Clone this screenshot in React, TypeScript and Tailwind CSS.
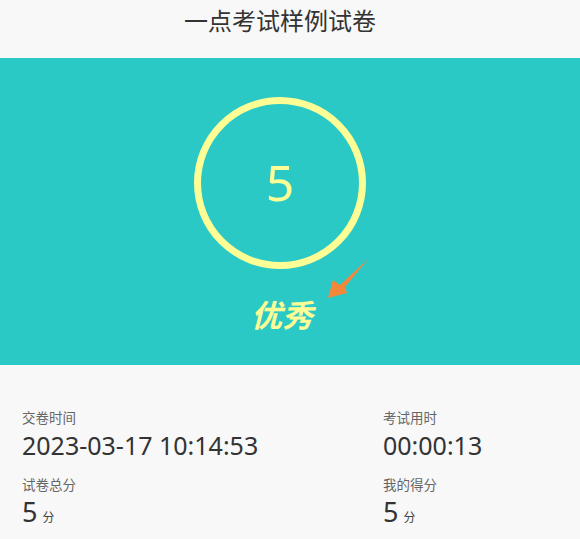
import React from "react";

const font = { fontFamily: '"Noto Sans", "Noto Sans CJK SC", sans-serif' };

function Stat({ label, value, unit, big }: { label: string; value: string; unit?: string; big?: boolean }) {
  return (
    <div className="flex flex-col">
      <div className="text-[13.5px] leading-[18px] text-[#666666]">{label}</div>
      <div className="mt-[2px] flex items-baseline text-[#333333]">
        <span className={big ? "text-[27px] leading-[32px]" : "text-[25px] leading-[32px]"}>{value}</span>
        {unit && <span className="ml-[5px] text-[12px] text-[#444444]">{unit}</span>}
      </div>
    </div>
  );
}

export default function App() {
  return (
    <div className="w-[580px] h-[539px] bg-[#f8f8f8] overflow-hidden" style={font}>
      <div className="h-[58px] flex items-start justify-center pt-[5px] pr-[20px]">
        <h1 className="text-[24px] leading-[32px] text-[#333333]">一点考试样例试卷</h1>
      </div>
      <div className="relative h-[307px] bg-[#2bc9c6] flex flex-col items-center pt-[39px] pr-[20px]">
        <div className="w-[172px] h-[172px] rounded-full border-[7px] border-[#fdfd96] flex items-center justify-center">
          <span className="text-[50px] leading-none font-normal text-[#fdfd96] pb-[2px]">5</span>
        </div>
        <div className="mt-[26px] text-[31px] leading-[40px] font-bold italic text-[#fdfd96] pl-[4px]">优秀</div>
        <svg className="absolute left-[325px] top-[200px]" width="46" height="42" viewBox="325 258 46 42">
          <polygon points="368,259 345,287 347,293 328,298 333,280 340,285" fill="#f5873a" />
        </svg>
      </div>
      <div className="grid grid-cols-[361px_1fr] gap-y-[15px] pl-[22px] pt-[44px]">
        <Stat label="交卷时间" value="2023-03-17 10:14:53" />
        <Stat label="考试用时" value="00:00:13" />
        <Stat label="试卷总分" value="5" unit="分" big />
        <Stat label="我的得分" value="5" unit="分" big />
      </div>
    </div>
  );
}
